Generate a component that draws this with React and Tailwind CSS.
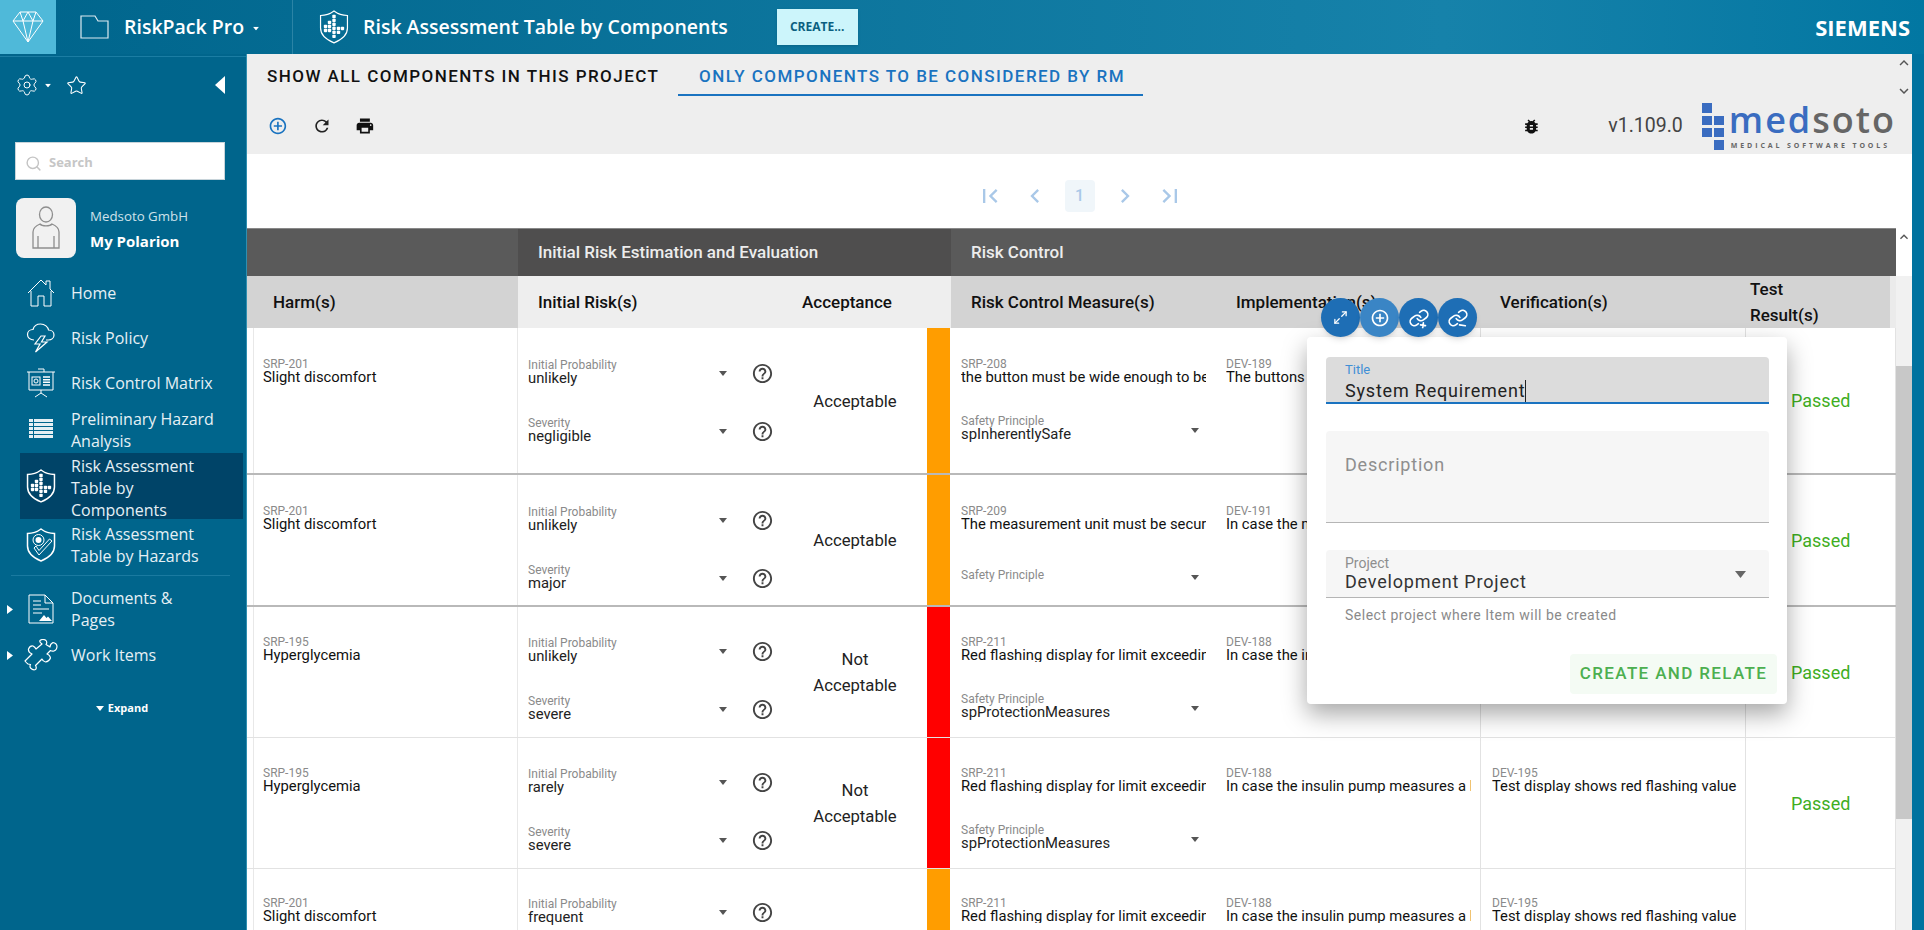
import { Settings, Star, Search, Maximize2 } from "lucide-react";
import {
  MdAddCircleOutline,
  MdRefresh,
  MdPrint,
  MdBugReport,
  MdHelpOutline,
  MdFirstPage,
  MdLastPage,
  MdChevronLeft,
  MdChevronRight,
  MdKeyboardArrowUp,
  MdKeyboardArrowDown,
} from "react-icons/md";

const rows = [
  {
    h: "h-[147px]", pt: "pt-[30px]", bb: "border-b-2 border-[#b9b9b9]", harmId: "SRP-201", harm: "Slight discomfort",
    prob: "unlikely", sev: "negligible", acc: ["Acceptable"], color: "bg-[#ff9d00]",
    mId: "SRP-208", m: "the button must be wide enough to be pressed easily", sp: "spInherentlySafe",
    iId: "DEV-189", i: "The buttons must be wide enough for usage", vId: "DEV-190", v: "Test display shows button size",
  },
  {
    h: "h-[132px]", pt: "pt-[30px]", bb: "border-b-2 border-[#b9b9b9]", harmId: "SRP-201", harm: "Slight discomfort",
    prob: "unlikely", sev: "major", acc: ["Acceptable"], color: "bg-[#ff9d00]",
    mId: "SRP-209", m: "The measurement unit must be secured against", sp: "",
    iId: "DEV-191", i: "In case the measurement unit is changed", vId: "DEV-192", v: "Test display shows measurement",
  },
  {
    h: "h-[131px]", pt: "pt-[29px]", bb: "border-b border-[#e2e2e2]", harmId: "SRP-195", harm: "Hyperglycemia",
    prob: "unlikely", sev: "severe", acc: ["Not", "Acceptable"], color: "bg-[#ff0000]",
    mId: "SRP-211", m: "Red flashing display for limit exceeding values", sp: "spProtectionMeasures",
    iId: "DEV-188", i: "In case the insulin pump measures a high value", vId: "DEV-195", v: "Test display shows red flashing value",
  },
  {
    h: "h-[131px]", pt: "pt-[29px]", bb: "border-b border-[#e2e2e2]", harmId: "SRP-195", harm: "Hyperglycemia",
    prob: "rarely", sev: "severe", acc: ["Not", "Acceptable"], color: "bg-[#ff0000]",
    mId: "SRP-211", m: "Red flashing display for limit exceeding values", sp: "spProtectionMeasures",
    iId: "DEV-188", i: "In case the insulin pump measures a high value", vId: "DEV-195", v: "Test display shows red flashing value",
  },
  {
    h: "h-[147px]", pt: "pt-[28px]", bb: "", harmId: "SRP-201", harm: "Slight discomfort",
    prob: "frequent", sev: "severe", acc: ["Acceptable"], color: "bg-[#ff9d00]",
    mId: "SRP-211", m: "Red flashing display for limit exceeding values", sp: "spProtectionMeasures",
    iId: "DEV-188", i: "In case the insulin pump measures a high value", vId: "DEV-195", v: "Test display shows red flashing value",
  },
];

const Caret = ({ className }) => (
  <svg width="8" height="5" viewBox="0 0 8 5" className={className}>
    <polygon points="0,0 8,0 4,5" fill="currentColor" />
  </svg>
);

const ShieldDots = ({ size = 30, bold }) => (
  <svg width={size} height={size * 1.13} viewBox="0 0 30 34" fill="none">
    <path d="M15 1C11 4 6 5.500 1.500 5.500V18C1.500 26 9 30.500 15 33C21 30.500 28.500 26 28.500 18V5.500C24 5.500 19 4 15 1Z" stroke="white" strokeWidth={bold ? 1.500 : 1.200} />
    {[[15, 6.500], [15, 10.500], [15, 14.500], [15, 18.500], [15, 22.500], [15, 26.500], [10.500, 12.500], [10.500, 16.500], [10.500, 20.500], [6.500, 16.500], [6.500, 20.500], [19.500, 18.500], [19.500, 22.500], [23.500, 18.500]].map(([x, y]) => (
      <rect key={`${x}-${y}`} x={x - 1.700} y={y - 1.700} width="3.400" height="3.400" rx="0.800" fill="white" />
    ))}
  </svg>
);

const navIcons = {
  home: (
    <svg width="30" height="30" viewBox="0 0 30 30" fill="none" stroke="white" strokeWidth="1">
      <path d="M2 15L15 2L20 7V3H24V11L28 15M5 13V28H12V18H18V28H25V13" />
    </svg>
  ),
  policy: (
    <svg width="30" height="32" viewBox="0 0 30 32" fill="none" stroke="white" strokeWidth="1.200">
      <path d="M8 18C4 18 1.500 15.500 1.500 12.500C1.500 9.500 4 7.500 7 7.500C8 4 11 2 14.500 2C19 2 22 5 22.500 8C25.500 8 28 10 28 13C28 16 25.500 18 22.500 18H20" />
      <path d="M15 14L9 22H14L9.500 30L21 20H15.500L19 14Z" />
    </svg>
  ),
  matrix: (
    <svg width="30" height="30" viewBox="0 0 30 30" fill="none" stroke="white" strokeWidth="1">
      <path d="M1 4H29M3 4V22H27V4M12 1H18V4M15 22V25M9 29L15 25L21 29" />
      <rect x="6" y="9" width="8" height="8" />
      <circle cx="10" cy="13" r="2" />
      <path d="M17 9H24M17 11.700H24M17 14.300H24M17 17H24" strokeWidth="1.500" />
    </svg>
  ),
  list: (
    <svg width="26" height="22" viewBox="0 0 26 22" fill="white" opacity="0.9">
      {[1, 5, 9, 13, 17].map((y) => (
        <g key={y}>
          <rect x="1" y={y} width="4" height="3" />
          <rect x="6" y={y} width="19" height="3" />
        </g>
      ))}
    </svg>
  ),
  comp: <ShieldDots bold />,
  hazard: (
    <svg width="30" height="34" viewBox="0 0 30 34" fill="none" stroke="white">
      <path d="M15 1C11 4 6 5.500 1.500 5.500V18C1.500 26 9 30.500 15 33C21 30.500 28.500 26 28.500 18V5.500C24 5.500 19 4 15 1Z" strokeWidth="1.500" />
      <circle cx="12.500" cy="12" r="3" fill="white" stroke="none" />
      <circle cx="12.500" cy="12" r="5.500" strokeWidth="1" />
      <path d="M8 20L13 27L26 13L23.500 11L13 22.500L10 18Z" strokeWidth="1" />
    </svg>
  ),
  doc: (
    <svg width="26" height="30" viewBox="0 0 26 30" fill="none" stroke="white" strokeWidth="1">
      <path d="M1 1H17L25 9V29H1Z" />
      <path d="M17 1V9H25M5 7H13M5 11H13M5 15H21M5 19H14" />
      <path d="M11 27L16 21L18.500 24L20 22.500L24 27Z" fill="white" stroke="none" />
    </svg>
  ),
  puzzle: (
    <svg width="34" height="32" viewBox="0 0 34 32" fill="none" stroke="white" strokeWidth="1.200" strokeLinejoin="round">
      <path d="M1 22L8 15Q4 13 4.500 10Q6 6.500 9 7Q11 8 12 10L18 5Q15 3 16 1.500Q19 -0.500 22 1.500Q23.500 3.500 22 5.500L26 8Q26 5 29 3.500Q32.500 4 33 7Q33 11 30 12Q28 12.500 26.500 11.500L23 15Q26 16 26.500 19Q25 22.500 21.500 23Q19 22.500 18 20L11.500 26.500Q13 29 11.500 30.500Q9 31.500 6.500 29Q5.500 27.500 6.500 25.500L4 25Q2.500 24 1 22Z" />
    </svg>
  ),
};

const NavItem = ({ icon, lines, h, arrow, active, textClass = "" }) => (
  <div className={`relative flex items-center ml-[20px] mr-[3px] ${h} ${active ? "bg-[#004468]" : ""}`}>
    {arrow && (
      <svg width="6" height="9" viewBox="0 0 6 9" className="absolute left-[-13px]">
        <polygon points="0,0 6,4.500 0,9" fill="white" />
      </svg>
    )}
    <div className="w-[42px] flex justify-center shrink-0">{navIcons[icon]}</div>
    <div className={`pl-[9px] text-[16px] leading-[22px] text-[#e6f0f5] ${textClass}`}>
      {lines.map((l) => (
        <div key={l}>{l}</div>
      ))}
    </div>
  </div>
);

const Sidebar = () => (
  <aside className="w-[247px] shrink-0 bg-[#00658c] border-r border-[#2f8fb0] font-['Open_Sans',sans-serif] overflow-hidden">
    <div className="flex items-center h-[58px] pl-[15px] pr-[21px] pb-[1px] mt-[2px] mb-[28px] border-t border-[#1b7da3]">
      <Settings size={24} strokeWidth={1} color="white" />
      <Caret className="text-white ml-[5px] scale-75" />
      <Star size={21} strokeWidth={1.200} color="white" className="ml-[14px]" />
      <svg width="10" height="18" viewBox="0 0 10 18" className="ml-auto">
        <polygon points="10,0 10,18 0,9" fill="white" />
      </svg>
    </div>
    <div className="mx-[15px] w-[210px] h-[38px] bg-white border border-[#c8d4da] flex items-center pl-[9px] pt-[4px] gap-[7px]">
      <Search size={17} color="#c4c4c4" strokeWidth={2} />
      <span className="text-[13px] font-bold text-[#c6c6c6]">Search</span>
    </div>
    <div className="flex items-center mt-[18px] ml-[16px]">
      <div className="w-[60px] h-[60px] bg-[#f1f1f1] rounded-lg flex items-center justify-center">
        <svg width="30" height="44" viewBox="0 0 30 44" fill="none" stroke="#8e8e8e" strokeWidth="1.300">
          <ellipse cx="15" cy="8.500" rx="6.500" ry="7.500" />
          <path d="M9 18C4 20 2 22 2 26V42H28V26C28 22 26 20 21 18C19 20.500 11 20.500 9 18ZM7 30V42M23 30V42" />
        </svg>
      </div>
      <div className="ml-[14px] mt-[1px]">
        <div className="text-[13.300px] leading-[18px] text-[#cfe2ea]">Medsoto GmbH</div>
        <div className="text-[15px] leading-[18px] font-bold text-white mt-[7px]">My Polarion</div>
      </div>
    </div>
    <div className="mt-[12px]">
      <NavItem icon="home" lines={["Home"]} h="h-[45px]" />
      <NavItem icon="policy" lines={["Risk Policy"]} h="h-[45px]" />
      <NavItem icon="matrix" lines={["Risk Control Matrix"]} h="h-[45px]" />
      <NavItem icon="list" lines={["Preliminary Hazard", "Analysis"]} h="h-[47px]" textClass="pt-[2px]" />
      <NavItem icon="comp" lines={["Risk Assessment", "Table by", "Components"]} h="h-[66px] mt-[1px]" textClass="pt-[3px]" active />
      <NavItem icon="hazard" lines={["Risk Assessment", "Table by Hazards"]} h="h-[48px] mt-[2px]" />
      <div className="mx-[11px] w-[219px] h-px bg-[#1a7aa0] mt-[6px] mb-[10px]" />
      <NavItem icon="doc" lines={["Documents &", "Pages"]} h="h-[46px]" arrow />
      <NavItem icon="puzzle" lines={["Work Items"]} h="h-[46px]" arrow />
    </div>
    <div className="flex items-center justify-center gap-[4px] mt-[22px] pr-[2px] text-[11px] font-bold text-white">
      <Caret />
      <span>Expand</span>
    </div>
  </aside>
);

const TopBar = () => (
  <header className="h-[54px] shrink-0 flex items-center text-white font-['Open_Sans',sans-serif] bg-gradient-to-r from-[#00658c] via-[#1682aa] via-75% to-[#0277a2]">
    <div className="w-[56px] h-full bg-[#4fb9d9] flex items-center justify-center">
      <svg width="32" height="32" viewBox="0 0 32 32" fill="none" stroke="white" strokeWidth="1">
        <path d="M8 1H24L31 10L16 31L1 10ZM1 10H31M8 1L11 10L16 31L21 10L24 1M11 10L16 1L21 10" />
      </svg>
    </div>
    <div className="flex items-center w-[237px] h-full border-r border-[#2b84a6] pl-[24px]">
      <svg width="29" height="24" viewBox="0 0 29 24" fill="none" stroke="#dceaf0" strokeWidth="1.200">
        <path d="M1 23V1H15L18 6H28V23Z" />
      </svg>
      <span className="ml-[15px] text-[19.500px] font-semibold">RiskPack Pro</span>
      <Caret className="ml-[8px] mt-[3px] scale-75" />
    </div>
    <div className="ml-[26px]">
      <ShieldDots size={30} />
    </div>
    <span className="ml-[14px] text-[19.500px] font-semibold">Risk Assessment Table by Components</span>
    <button className="ml-[49px] w-[81px] h-[36px] bg-[#ccf5fb] text-[#0a5f80] text-[12px] font-bold shadow">CREATE...</button>
    <span className="ml-auto mr-[14px] text-[22px] font-bold">SIEMENS</span>
  </header>
);

const Toolbar = () => (
  <div className="h-[100px] shrink-0 bg-[#eeeeee] flex">
    <div className="flex-1 min-w-0 relative">
      <div className="flex h-[42px] pl-[20px] text-[17px] font-medium tracking-[1.450px] uppercase">
        <div className="w-[411px] pt-[10px] text-[#111] whitespace-nowrap">Show all components in this project</div>
        <div className="w-[465px] pt-[10px] pl-[21px] text-[#1a73c0] border-b-2 border-[#1a73c0] whitespace-nowrap">Only components to be considered by RM</div>
      </div>
      <div className="flex items-center h-[58px] pl-[21px] pt-[2px]">
        <MdAddCircleOutline size={20} color="#1a73c0" />
        <MdRefresh size={20} color="#222" className="ml-[24px]" />
        <MdPrint size={20} color="#111" className="ml-[23px]" />
        <MdBugReport size={19} color="#111" className="ml-[1148px]" />
        <span className="ml-[67px] text-[19.500px] text-[#444]">v1.109.0</span>
        <Medsoto />
      </div>
    </div>
    <div className="w-[16px] flex flex-col items-center text-[#555]">
      <MdKeyboardArrowUp size={18} />
      <MdKeyboardArrowDown size={18} className="mt-[10px]" />
    </div>
  </div>
);

const Medsoto = () => (
  <div className="ml-[19px] flex items-start h-[48px] mt-[-2px]">
    <div className="grid grid-cols-2 gap-x-[2px] gap-y-[3px] w-[22px] mr-[5px] mt-[2px]">
      <div className="w-[10px] h-[10px] bg-[#3a6cc0]" />
      <div />
      <div className="w-[10px] h-[9px] bg-[#3a6cc0]" />
      <div className="w-[10px] h-[9px] bg-[#3a6cc0]" />
      <div className="w-[10px] h-[9px] bg-[#3a6cc0]" />
      <div className="w-[10px] h-[9px] bg-[#3a6cc0]" />
      <div />
      <div className="w-[10px] h-[10px] bg-[#3a6cc0]" />
    </div>
    <div className="font-['Open_Sans',sans-serif]">
      <div className="text-[36px] leading-[34px] font-semibold tracking-[2px] mt-[2px] whitespace-nowrap">
        <span className="text-[#3a6cc0]">med</span>
        <span className="text-[#666]">soto</span>
      </div>
      <div className="text-[7px] leading-[9px] mt-[4px] ml-[2px] font-bold tracking-[2.900px] text-[#666] whitespace-nowrap">MEDICAL SOFTWARE TOOLS</div>
    </div>
  </div>
);

const Pagination = () => (
  <div className="h-[74px] shrink-0 bg-white flex items-center justify-center text-[#a9c8e8] pr-[0px] pt-[10px]">
    <MdFirstPage size={28} />
    <MdChevronLeft size={28} className="ml-[17px]" />
    <span className="ml-[16px] w-[30px] h-[32px] bg-[#f0f6fa] rounded flex items-center justify-center text-[16px] font-medium">1</span>
    <MdChevronRight size={28} className="ml-[16px]" />
    <MdLastPage size={28} className="ml-[17px]" />
  </div>
);

const Select = ({ label, value, className = "" }) => (
  <div className={`flex items-center ${className}`}>
    <div className="flex-1 min-w-0 h-[26px]">
      <div className={`text-[12px] leading-[13px] text-[#8a8a8a] ${value ? "" : "mt-[7px]"}`}>{label}</div>
      <div className="text-[14.800px] leading-[13px] text-[#222] whitespace-nowrap">{value}</div>
    </div>
    <Caret className="text-[#555] mt-[4px]" />
  </div>
);

const TextCell = ({ row, id, text, border }) => (
  <div className={`${row.pt} pl-[11px] ${border ? "border-l border-[#e2e2e2]" : ""}`}>
    <div className="w-[245px] overflow-hidden whitespace-nowrap">
      <div className="text-[12px] leading-[13px] text-[#8a8a8a]">{id}</div>
      <div className="text-[14.800px] leading-[13px] text-[#111]">{text}</div>
    </div>
  </div>
);

const Row = ({ row }) => (
  <div className={`grid grid-cols-[271px_409px_23px_265px_265px_265px_151px] ${row.h} ${row.bb} overflow-hidden`}>
    <div className={`${row.pt} pl-[9px] ml-[6px] border-l border-[#e8e8e8] border-r`}>
      <div className="text-[12px] leading-[13px] text-[#8a8a8a]">{row.harmId}</div>
      <div className="text-[14.800px] leading-[13px] text-[#111]">{row.harm}</div>
    </div>
    <div className={`flex ${row.pt}`}>
      <div className="w-[265px] pl-[10px] shrink-0">
        <div className="flex items-center">
          <Select label="Initial Probability" value={row.prob} className="w-[199px]" />
          <MdHelpOutline size={23} color="#444" className="ml-[24px] mt-[4px]" />
        </div>
        <div className="flex items-center mt-[31px]">
          <Select label="Severity" value={row.sev} className="w-[199px]" />
          <MdHelpOutline size={23} color="#444" className="ml-[24px] mt-[4px]" />
        </div>
      </div>
    </div>
    <div className={`${row.color} row-start-1 col-start-3 h-[calc(100%+2px)]`} />
    <div className={`${row.pt}`}>
      <div className="pl-[11px] w-[245px] box-content">
        <div className="overflow-hidden whitespace-nowrap">
          <div className="text-[12px] leading-[13px] text-[#8a8a8a]">{row.mId}</div>
          <div className="text-[14.800px] leading-[13px] text-[#111]">{row.m}</div>
        </div>
        <Select label="Safety Principle" value={row.sp} className="mt-[31px] w-[238px]" />
      </div>
    </div>
    <TextCell row={row} id={row.iId} text={row.i} />
    <TextCell row={row} id={row.vId} text={row.v} border />
    <div className="flex items-center pl-[45px] border-l border-r border-[#e2e2e2] text-[18px] text-[#3fae1f]">Passed</div>
  </div>
);

const Acceptance = ({ row }) => (
  <div className={`${row.h} flex flex-col items-center justify-center text-[16.700px] leading-[25.500px] text-[#222]`}>
    {row.acc.map((a) => (
      <div key={a}>{a}</div>
    ))}
  </div>
);

const Table = () => (
  <div className="flex-1 min-h-0 flex overflow-hidden">
    <div className="w-[1649px] shrink-0 relative">
      <div className="grid grid-cols-[271px_433px_945px] h-[48px] border-t border-[#888] text-[17px] font-medium text-[#ececec]">
        <div className="bg-[#5a5a5a]" />
        <div className="bg-[#4f4e4e] pl-[20px] flex items-center">Initial Risk Estimation and Evaluation</div>
        <div className="bg-[#5a5a5a] pl-[20px] flex items-center">Risk Control</div>
      </div>
      <div className="grid grid-cols-[271px_433px_264px_265px_265px_145px_6px] h-[52px] border-b-2 border-[#a8a8a8] text-[17px] font-medium text-[#111]">
        <div className="bg-[#d3d3d3] pl-[26px] pt-[2px] flex items-center">Harm(s)</div>
        <div className="bg-[#eeeeee] pl-[20px] pt-[2px] flex items-center">
          <span className="w-[264px]">Initial Risk(s)</span>
          <span>Acceptance</span>
        </div>
        <div className="bg-[#d3d3d3] pl-[20px] pt-[2px] flex items-center whitespace-nowrap">Risk Control Measure(s)</div>
        <div className="bg-[#d3d3d3] pl-[21px] pt-[2px] flex items-center">Implementation(s)</div>
        <div className="bg-[#d3d3d3] pl-[20px] pt-[2px] flex items-center">Verification(s)</div>
        <div className="bg-[#d3d3d3] pl-[5px] flex items-center leading-[26px]">
          <span>
            Test
            <br />
            Result(s)
          </span>
        </div>
        <div className="bg-[#ebebeb]" />
      </div>
      {rows.map((row) => (
        <div key={row.h + row.pt + row.harm + row.prob} className="relative">
          <Row row={row} />
          <div className="absolute top-0 left-[536px] w-[144px] pointer-events-none">
            <Acceptance row={row} />
          </div>
        </div>
      ))}
    </div>
    <div className="w-[16px] bg-[#f1f1f1] flex flex-col">
      <div className="h-[48px] bg-white flex justify-center text-[#555]">
        <MdKeyboardArrowUp size={18} />
      </div>
      <div className="h-[90px]" />
      <div className="h-[453px] bg-[#c8c8c8]" />
    </div>
  </div>
);

const ActionPopup = () => (
  <div className="absolute left-[1307px] top-[298px] w-[480px] font-['Roboto',sans-serif]">
    <div className="flex pl-[14px] h-[39px]">
      <div className="w-[39px] h-[39px] rounded-full bg-[#1e6eb5] shadow-md flex items-center justify-center">
        <Maximize2 size={15} color="white" strokeWidth={2} />
      </div>
      <div className="w-[39px] h-[39px] rounded-full bg-[#3a85c5] shadow-md flex items-center justify-center">
        <MdAddCircleOutline size={20} color="white" />
      </div>
      <div className="w-[39px] h-[39px] rounded-full bg-[#1e6eb5] shadow-md flex items-center justify-center">
        <svg width="20" height="20" viewBox="0 0 24 24" fill="none" stroke="white" strokeWidth="2" strokeLinecap="round" className="rotate-[8deg]">
          <path d="M10 13a5 5 0 0 0 7.540.540l3-3a5 5 0 0 0-7.070-7.070l-1.720 1.710" />
          <path d="M14 11a5 5 0 0 0-7.540-.540l-3 3a5 5 0 0 0 7.070 7.070l1.710-1.710" />
          <path d="M18 17v6M15 20h6" />
        </svg>
      </div>
      <div className="w-[39px] h-[39px] rounded-full bg-[#1e6eb5] shadow-md flex items-center justify-center">
        <svg width="20" height="20" viewBox="0 0 24 24" fill="none" stroke="white" strokeWidth="2" strokeLinecap="round" className="rotate-[8deg]">
          <path d="M10 13a5 5 0 0 0 7.540.540l3-3a5 5 0 0 0-7.070-7.070l-1.720 1.710" />
          <path d="M14 11a5 5 0 0 0-7.540-.540l-3 3a5 5 0 0 0 7.070 7.070l1.710-1.710" />
          <path d="M15 20h7" />
        </svg>
      </div>
    </div>
    <div className="h-[367px] bg-white rounded shadow-[0_10px_24px_rgba(0,0,0,0.35)] px-[19px] pt-[20px]">
      <div className="w-[443px] h-[47px] bg-[#dcdcdc] rounded-t border-b-2 border-[#1a73c0] pl-[19px] pt-[5px]">
        <div className="text-[13px] leading-[16px] text-[#3f8fd6]">Title</div>
        <div className="text-[18px] leading-[22px] tracking-[0.800px] mt-[2px] text-[#222] flex items-center">
          System Requirement
          <span className="inline-block w-px h-[22px] bg-[#222]" />
        </div>
      </div>
      <div className="w-[443px] h-[92px] mt-[27px] bg-[#f6f6f6] rounded-t border-b border-[#b5b5b5] pl-[19px] pt-[22px] text-[18px] leading-[24px] tracking-[0.800px] text-[#8e8e8e]">
        Description
      </div>
      <div className="w-[443px] h-[48px] mt-[27px] bg-[#f6f6f6] rounded-t border-b border-[#b5b5b5] pl-[19px] pt-[5px] flex">
        <div className="flex-1">
          <div className="text-[14px] leading-[16px] text-[#8e8e8e]">Project</div>
          <div className="text-[18px] leading-[22px] tracking-[0.800px] text-[#333]">Development Project</div>
        </div>
        <svg width="11" height="7" viewBox="0 0 11 7" className="mt-[16px] mr-[23px] text-[#666]">
          <polygon points="0,0 11,0 5.500,7" fill="currentColor" />
        </svg>
      </div>
      <div className="pl-[19px] mt-[9px] text-[14px] leading-[16px] tracking-[0.500px] text-[#8a8a8a] whitespace-nowrap">Select project where Item will be created</div>
      <div className="flex justify-end mt-[31px] mr-[-9px]">
        <button className="w-[207px] h-[40px] bg-[#f4fbf4] rounded text-[17px] font-medium tracking-[1.350px] text-[#4caf50] whitespace-nowrap">CREATE AND RELATE</button>
      </div>
    </div>
  </div>
);

export default function App() {
  return (
    <div className="relative w-[1924px] h-[930px] overflow-hidden flex flex-col bg-white font-['Roboto',sans-serif]">
      <TopBar />
      <div className="flex-1 min-h-0 flex">
        <Sidebar />
        <main className="flex-1 min-w-0 flex flex-col">
          <Toolbar />
          <Pagination />
          <Table />
        </main>
        <div className="w-[12px] shrink-0 bg-[#00729f]" />
      </div>
      <ActionPopup />
    </div>
  );
}
